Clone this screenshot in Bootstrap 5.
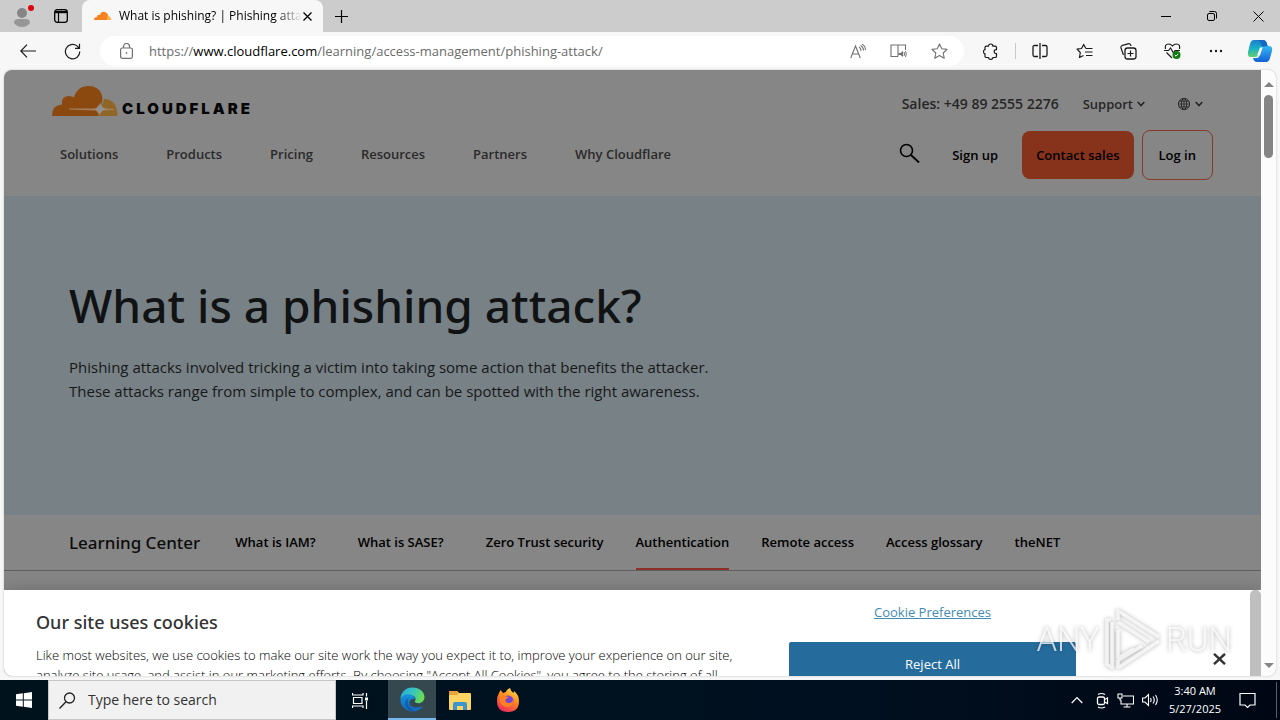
<!DOCTYPE html>
<html lang="en">
<head>
<meta charset="utf-8">
<meta name="viewport" content="width=device-width, initial-scale=1">
<title>What is phishing? | Phishing attack</title>
<link rel="stylesheet" href="https://cdn.jsdelivr.net/npm/bootstrap@5.3.0/dist/css/bootstrap.min.css">
<style>
  body { font-family: "Open Sans", "Noto Sans", sans-serif; font-size: 14px; line-height: 20px; background: #f7f7f7; color: #000; }
  svg { display: block; flex-shrink: 0; fill: none; }
  svg:not([stroke]) { stroke: currentColor; }
  svg[fill] { fill: currentColor; }
  button { background: none; border: 0; padding: 0; color: inherit; font: inherit; }
  a { color: inherit; text-decoration: none; }

  /* browser chrome */
  .tab-strip { height: 32px; background: #cccccc; }
  .browser-tab { width: 241px; margin-left: 14px; padding: 0 11px 0 12px; background: #f7f7f7; border-radius: 8px 8px 0 0; font-size: 12px; }
  .tab-title { white-space: nowrap; -webkit-mask-image: linear-gradient(90deg, #000 86%, transparent); mask-image: linear-gradient(90deg, #000 86%, transparent); }
  .tool-row { height: 38px; background: #f7f7f7; color: #1b1b1b; }
  .address { height: 30px; margin-left: 19px; border-radius: 15px; background: #fff; color: #707070; }
  .address-text { font-size: 13px; outline: 0; white-space: nowrap; color: #6b6b6b; }
  .address-text span { color: #000; }
  .tool-icons { padding: 0 10px 0 17px; }
  .tool-icons > button { width: 20px; display: flex; justify-content: center; }
  .tool-icons > svg { margin: 0 14px; }

  /* page */
  .page-frame { border-radius: 8px; background: #fcfcfc; box-shadow: 0 0 2px #b5b5b5; margin: 0 4px 4px; }
  .site { background: #868686; }
  .site-head { height: 126px; }
  .top-links { padding-right: 10px; font-size: 14px; font-weight: 600; color: #262626; }
  .top-links button { font-size: 13px; }
  .main-links { gap: 48px; font-size: 13px; font-weight: 600; color: #2a2a2a; }
  .brand-name { font-family: Inter, sans-serif; font-weight: 900; font-size: 15px; letter-spacing: 3px; line-height: 14px; color: #060606; }
  .head-acts { font-size: 13px; font-weight: 600; }
  .cta { height: 48px; padding: 0 14px; border-radius: 8px; background: #87331b; }
  .cta-line { height: 50px; padding: 0 16px; border-radius: 8px; border: 1px solid #87392a; }
  .hero { height: 319px; background: #788185; padding: 76px 65px 0; color: #101214; }
  .hero h1 { font-family: "Noto Sans", sans-serif; font-size: 46px; line-height: 66px; font-weight: 500; margin: 0 0 17px; }
  .hero p { font-size: 15px; line-height: 24px; margin: 0; max-width: 650px; color: #16191a; }
  .learn { height: 56px; padding: 0 65px; border-bottom: 1px solid #5e5e5e; }
  .learn h2 { font-family: "Noto Sans", sans-serif; font-size: 17px; line-height: 24px; font-weight: 500; margin: 0 35px 0 0; color: #0c0c0c; white-space: nowrap; }
  .learn-links { gap: 32px; font-size: 13px; font-weight: 600; }
  .learn-links a { padding: 17px 0 16px; white-space: nowrap; border-bottom: 2px solid transparent; }
  .learn-links .topic { margin-right: 10px; }
  .learn-links .current { border-bottom-color: #8c3029; }
  .scroll-rail { width: 15px; color: #858585; }
  .scroll-thumb { width: 9px; height: 63px; border-radius: 5px; background: #858585; }

  /* cookie sheet */
  .cookies { height: 86px; background: #fff; box-shadow: 0 0 18px rgba(0,0,0,.2); color: #333; overflow: hidden; }
  .cookies h2 { font-family: "Noto Sans", sans-serif; font-size: 18px; line-height: 26px; font-weight: 500; margin: 0 0 10px; }
  .cookies p { font-size: 13px; line-height: 20px; font-weight: 300; color: #000; margin: 0; }
  .cookie-copy { width: 785px; padding: 19px 38px 0 32px; }
  .cookie-acts { width: 287px; }
  .cookie-acts a { font-size: 13px; color: #3f8bb5; text-decoration: underline; }
  .reject { height: 43px; flex-shrink: 0; border-radius: 2px; background: #256c9d; color: #fff; font-size: 13px; }
  .cookie-thumb { width: 11px; border-radius: 5px 5px 0 0; background: #bfbfbf; }
  .watermark { right: 48px; bottom: 48px; gap: 4px; color: rgba(255,255,255,.75); font: 300 33px/40px Roboto, sans-serif; filter: drop-shadow(0 0 2px rgba(0,0,0,.4)); pointer-events: none; }

  /* taskbar */
  .taskbar { height: 40px; background: linear-gradient(90deg, #00131d, #001020 65%, #000714); color: #fff; }
  .find { width: 288px; background: #f1f1f1; border: 1px solid #c6c6c6; color: #222; }
  .find input { border: 0; background: none; outline: 0; width: 220px; font-size: 14px; color: #333; padding: 0; }
  .find input::placeholder { color: #333; opacity: 1; }
  .task-btn { width: 48px; height: 40px; }
  .task-on { background: #35484f; border-bottom: 2px solid #76b9ed; }
  .clock { width: 56px; font-size: 11px; line-height: 18px; white-space: nowrap; }
  .desk-edge { width: 4px; margin-left: 12px; border-left: 1px solid #56606b; }
</style>
</head>
<body class="vh-100 d-flex flex-column overflow-hidden">

<header>
  <div class="tab-strip d-flex align-items-center">
    <button class="ms-2 ps-1 position-relative" aria-label="Profile">
      <svg width="26" height="26" viewBox="0 0 26 26" stroke="none"><circle cx="10" cy="10" r="5" fill="#858585"/><path d="M2 20q0-4 4-4h8q4 0 4 4q-3 4-8 4t-8-4z" fill="#979797"/><circle cx="19" cy="5" r="3" fill="#e3000f"/></svg>
    </button>
    <button class="ms-3" aria-label="Tab actions">
      <svg width="14" height="14" viewBox="0 0 14 14"><rect x=".7" y=".7" width="12.6" height="12.6" rx="2.5" stroke-width="1.3"/><path d="M1 3h12" stroke-width="2.4"/><path d="M4.5 3v10" stroke-width="1.2"/></svg>
    </button>
    <div class="browser-tab d-flex align-items-center align-self-stretch">
      <svg class="me-2" width="17" height="10" viewBox="0 0 17 10" stroke="none"><path d="M0 9q0-3 3-3q0-3 3-2q1-4 5-3q3 1 3 4l-1 4z" fill="#f6821f"/><path d="M13.500 5q3.500 0 3.500 4h-4z" fill="#fbad41"/></svg>
      <span class="tab-title">What is phishing? | Phishing atta</span>
      <button class="ms-auto" aria-label="Close tab"><svg width="9" height="9" viewBox="0 0 9 9"><path d="M.5.5l8 8M8.500.5l-8 8" stroke-width="1.300"/></svg></button>
    </div>
    <button class="ms-2 ps-1" aria-label="New tab"><svg width="13" height="13" viewBox="0 0 13 13"><path d="M6.500 0v13M0 6.500h13" stroke-width="1.200"/></svg></button>
    <div class="ms-auto d-flex align-items-center gap-4 pe-3">
      <button class="me-2 pe-1" aria-label="Minimise"><svg width="10" height="10" viewBox="0 0 10 10"><path d="M0 5.500h10"/></svg></button>
      <button class="me-2 pe-1" aria-label="Restore"><svg width="10" height="10" viewBox="0 0 10 10"><rect x=".5" y="2.500" width="7" height="7" rx="1.500"/><path d="M2.500.5h5q2 0 2 2v5"/></svg></button>
      <button aria-label="Close"><svg width="11" height="11" viewBox="0 0 11 11"><path d="M.5.5l10 10M10.500.5l-10 10"/></svg></button>
    </div>
  </div>

  <div class="tool-row d-flex align-items-center">
    <button class="ms-3 ps-1" aria-label="Back"><svg width="16" height="14" viewBox="0 0 16 14"><path d="M16 7H1M7 .7L.8 7L7 13.300" stroke-width="1.200"/></svg></button>
    <button class="ms-4 ps-1" aria-label="Refresh"><svg width="17" height="17" viewBox="0 0 17 17"><path d="M15.800 8.500A7.200 7.200 0 1 1 13 2.900L15 5M15.500.8V5.300H11" stroke-width="1.200"/></svg></button>
    <div class="address flex-grow-1 px-3 d-flex align-items-center">
      <svg class="ms-1" width="13" height="16" viewBox="0 0 13 16"><rect x=".6" y="5" width="11.800" height="10.300" rx="1.800" stroke-width="1.200"/><path d="M3.500 5V3.500a3 3 0 0 1 6 0V5" stroke-width="1.200"/><circle cx="6.500" cy="10" r=".6"/></svg>
      <div class="address-text ms-3 flex-grow-1" role="textbox" contenteditable="true" spellcheck="false" aria-label="Address">https://<span>www.cloudflare.com</span>/learning/access-management/phishing-attack/</div>
      <button class="me-4" aria-label="Read aloud"><svg width="16" height="15" viewBox="0 0 16 15"><path d="M.7 14L5.500 2L10.300 14M2.300 10h6.400M9 3q2 1 2 4M10.500 1.500q3 1.500 3 5M12 0q3.500 2 3.500 6" stroke-width="1.100"/></svg></button>
      <button class="me-4" aria-label="Reader"><svg width="17" height="16" viewBox="0 0 17 16"><path d="M8 2v11.500M8 2H1v11.500h7M8 2h7.500v5" stroke-width="1.100"/><path d="M8.500 10h2l2.500-2v6l-2.500-2h-2z" fill="currentColor" stroke="none"/><path d="M14 9q1 2 0 4M15.500 8q1.500 3 0 6"/></svg></button>
      <button aria-label="Favourite"><svg width="17" height="16" viewBox="0 0 17 16"><path d="M8.500 1l2.300 4.800 5.200.6-3.800 3.600 1 5.200-4.700-2.600-4.700 2.600 1-5.200L1 6.400l5.200-.6z" stroke-width="1.100" stroke-linejoin="round"/></svg></button>
    </div>
    <div class="tool-icons d-flex align-items-center">
      <button aria-label="Extensions"><svg width="16" height="17" viewBox="0 0 16 17"><path d="M2 4.500q0-1.300 1.300-1.300H5.500Q5.500 1 7.700 1t2.200 2.200h2.300q1.300 0 1.300 1.300v2.200q-2.300-.2-2.300 1.900t2.300 1.900v2.700q0 1.300-1.300 1.300H9.900q0 1.800-2.200 1.800t-2.200-1.800H3.300Q2 14.500 2 13.200v-2.500H1.500q-1-.6-1-2t1-2H2z" stroke-width="1.200" stroke-linejoin="round"/></svg></button>
      <svg width="1" height="16" viewBox="0 0 1 16" stroke="#c8c8c8"><path d="M.5 0v16"/></svg>
      <button aria-label="Split screen"><svg width="16" height="16" viewBox="0 0 16 16"><path d="M6 2.500H2.500Q1 2.500 1 4v8q0 1.500 1.500 1.500H6M10 2.500h3.500Q15 2.500 15 4v8q0 1.500-1.500 1.500H10M8 0v16" stroke-width="1.300"/></svg></button>
      <button class="ms-4" aria-label="Favourites"><svg width="17" height="16" viewBox="0 0 17 16"><path d="M9.800 5.500L7.700 1.500 5.500 5.500 1 6.200l3.300 3.300-.8 5L7.500 12.500" stroke-width="1.200" stroke-linejoin="round"/><path d="M10 5.500h6.500M9 9h7.500M10 12.500h6.500" stroke-width="1.200"/></svg></button>
      <button class="ms-4" aria-label="Collections"><svg width="17" height="17" viewBox="0 0 17 17"><rect x="5" y="5" width="11" height="11" rx="2.500" stroke-width="1.300"/><path d="M3.500 12L1 5Q.5 3 2.500 2.300L8 .8q2-.5 2.800 1.400L11 3M10.500 7.500v6M7.500 10.500h6" stroke-width="1.200"/></svg></button>
      <button class="ms-4" aria-label="Browser essentials"><svg width="17" height="16" viewBox="0 0 17 16"><path d="M1.500 6Q.5 1 4.500 1 7 1 8.500 3 10 1 12.500 1q4 0 3 5M2.500 9.500L8 15M0 7.500h4.500L6.500 5l3 5L11 7.500h5" stroke-width="1.200"/><circle cx="12.500" cy="12" r="4" fill="#107c10" stroke="none"/><path d="M10.800 12l1.200 1.200 2.200-2.300" stroke="#fff"/></svg></button>
      <button class="ms-4" aria-label="More"><svg width="14" height="4" viewBox="0 0 14 4" fill="currentColor" stroke="none"><circle cx="2" cy="2" r="1.200"/><circle cx="7" cy="2" r="1.200"/><circle cx="12" cy="2" r="1.200"/></svg></button>
      <button class="ms-4" aria-label="Copilot"><svg width="26" height="24" viewBox="0 0 26 24" stroke="none"><defs><linearGradient id="ca" x1="0" y1="0" x2="0" y2="1"><stop offset="0" stop-color="#1c7fd0"/><stop offset=".5" stop-color="#18b0c4"/><stop offset="1" stop-color="#65cf70"/></linearGradient><linearGradient id="cb" x1="0" y1="0" x2="0" y2="1"><stop offset="0" stop-color="#35b9f1"/><stop offset="1" stop-color="#1360d8"/></linearGradient></defs><path d="M7 1h9q3 0 4 4l1 3h-4q-3 0-4 4l-1 4q-1 2-4 2H4q-4 0-3-5L3 5q1-4 4-4z" fill="url(#ca)"/><path d="M19 23h-9q-3 0-4-4h4q2 0 3-4l2-6q1-2 3-2h4q4 0 3 5l-2 7q-1 4-4 4z" fill="url(#cb)"/><path d="M16 1q3 0 4 4l.7 2.200L15 7.500Q13 1 10 1z" fill="#1668c7"/><path d="M13 8.500h2.500l-2.500 8h-3z" fill="#f7f7f7"/></svg></button>
    </div>
  </div>
</header>

<div class="page-frame flex-grow-1 d-flex overflow-hidden position-relative">
  <main class="site flex-grow-1 position-relative overflow-hidden">
    <div class="site-head d-flex justify-content-between px-5">
      <div class="d-flex flex-column pt-3">
        <a href="#" class="d-flex align-items-end" aria-label="Cloudflare home">
          <svg width="66" height="30" viewBox="0 0 66 30" stroke="none"><path d="M0 30Q0 19 10 18.500Q9 10 17 10q3 0 5 1.500Q25 0 37 0q9 0 12.500 8Q51.500 14 49 19l-3 11z" fill="#8b4910"/><path d="M52 13q13 0 13.500 17H46l3.500-9Q51 17 52 13z" fill="#916526"/><path d="M17 22.500h27l3-4 3 4 12 .4v1l-12 .6-3 4-3-4-27-1z" fill="#a08260"/><path d="M42 23q6-1 6-7 1 6 7 7-6 1-7 6-1-5-6-6z" fill="#929292"/></svg>
          <span class="brand-name ms-1">CLOUDFLARE</span>
        </a>
        <nav class="main-links d-flex ms-2 mt-4 pt-1">
          <a href="#">Solutions</a><a href="#">Products</a><a href="#">Pricing</a><a href="#">Resources</a><a href="#">Partners</a><a href="#">Why Cloudflare</a>
        </nav>
      </div>
      <div class="d-flex flex-column align-items-end pt-4">
        <div class="top-links d-flex align-items-center gap-4">
          <a href="#">Sales: +49 89 2555 2276</a>
          <button class="d-flex align-items-center gap-1">Support <svg width="8" height="6" viewBox="0 0 8 6"><path d="M.7 1L4 4.500 7.300 1" stroke-width="1.600"/></svg></button>
          <button class="d-flex align-items-center gap-1 ms-2" aria-label="Language"><svg width="14" height="14" viewBox="0 0 14 14"><circle cx="7" cy="7" r="5.600"/><ellipse cx="7" cy="7" rx="2.600" ry="5.600"/><path d="M1.400 7h11.200M7 1.400v11.200M2.200 4.200h9.600M2.200 9.800h9.600" stroke-width=".8"/></svg><svg width="8" height="6" viewBox="0 0 8 6"><path d="M.7 1L4 4.500 7.300 1" stroke-width="1.600"/></svg></button>
        </div>
        <div class="head-acts d-flex align-items-center mt-3">
          <button class="me-4 mb-1" aria-label="Search"><svg width="21" height="21" viewBox="0 0 21 21"><circle cx="7.500" cy="7.500" r="6" stroke-width="1.600"/><path d="M12 12L20 19.500" stroke-width="1.800"/></svg></button>
          <a href="#" class="ms-2 me-4">Sign up</a>
          <button class="cta me-2">Contact sales</button>
          <button class="cta-line">Log in</button>
        </div>
      </div>
    </div>
    <section class="hero">
      <h1>What is a phishing attack?</h1>
      <p>Phishing attacks involved tricking a victim into taking some action that benefits the attacker. These attacks range from simple to complex, and can be spotted with the right awareness.</p>
    </section>
    <div class="learn d-flex align-items-center">
      <h2>Learning Center</h2>
      <nav class="learn-links d-flex">
        <a href="#" class="topic">What is IAM?</a><a href="#" class="topic">What is SASE?</a><a href="#">Zero Trust security</a><a href="#" class="current">Authentication</a><a href="#">Remote access</a><a href="#">Access glossary</a><a href="#">theNET</a>
      </nav>
    </div>
    <section class="cookies position-absolute bottom-0 start-0 end-0 d-flex" aria-label="Cookie notice">
      <div class="cookie-copy">
        <h2>Our site uses cookies</h2>
        <p>Like most websites, we use cookies to make our site work the way you expect it to, improve your experience on our site, analyze site usage, and assist in our marketing efforts. By choosing "Accept All Cookies", you agree to the storing of all</p>
      </div>
      <div class="cookie-acts d-flex flex-column pt-2">
        <a href="#" class="align-self-center mt-1 mb-3 pb-1">Cookie Preferences</a>
        <button class="reject">Reject All</button>
      </div>
      <button class="ms-auto me-4 mt-5 pt-1" aria-label="Close notice"><svg width="13" height="12" viewBox="0 0 13 12"><path d="M1 .8l11 10.400M12 .8L1 11.200" stroke-width="2.400"/></svg></button>
      <div class="cookie-thumb align-self-stretch"></div>
    </section>
  </main>
  <div class="scroll-rail d-flex flex-column align-items-center py-2">
    <svg class="mt-1" width="10" height="5" viewBox="0 0 10 5" stroke="none" fill="currentColor"><path d="M0 5l5-5 5 5z"/></svg>
    <div class="scroll-thumb mt-2"></div>
    <svg class="mt-auto" width="10" height="5" viewBox="0 0 10 5" stroke="none" fill="currentColor"><path d="M0 0l5 5 5-5z"/></svg>
  </div>
</div>

<footer class="taskbar d-flex align-items-center">
  <button class="task-btn d-flex align-items-center justify-content-center" aria-label="Start"><svg width="16" height="16" viewBox="0 0 16 16" stroke="none" fill="currentColor"><path d="M0 2.300l6.800-1v6.200H0zM7.800 1.200L16 0v7.500H7.800zM0 8.500h6.800v6.200L0 13.700zM7.800 8.500H16V16l-8.200-1.200z"/></svg></button>
  <label class="find d-flex align-items-center align-self-stretch ps-2">
    <svg width="19" height="19" viewBox="0 0 19 19"><circle cx="12.500" cy="7" r="5" stroke-width="1.300"/><path d="M9 10.800L2.500 17.500" stroke-width="1.400"/></svg>
    <input class="ms-2 ps-1" type="text" placeholder="Type here to search" aria-label="Type here to search">
  </label>
  <button class="task-btn d-flex align-items-center justify-content-center" aria-label="Task view"><svg width="17" height="17" viewBox="0 0 17 17"><path d="M.5 1v2h10.500V1M.5 16v-2h10.500v2M1.500 5.500h8.500v6H1.500zM14.500 1v3.500M14.500 9v8" stroke-width="1.200"/><path d="M13 5.500h3v3h-3z" fill="currentColor" stroke="none"/></svg></button>
  <button class="task-btn task-on ms-1 d-flex align-items-center justify-content-center" aria-label="Edge"><svg width="25" height="25" viewBox="0 0 24 24" stroke="none"><defs><linearGradient id="ea" x1="0" y1="0" x2="1" y2=".3"><stop offset="0" stop-color="#2aa9e0"/><stop offset=".55" stop-color="#36c5c0"/><stop offset="1" stop-color="#66dc57"/></linearGradient><linearGradient id="eb" x1="0" y1="0" x2="0" y2="1"><stop offset="0" stop-color="#1593dd"/><stop offset="1" stop-color="#1565bd"/></linearGradient></defs><path d="M.5 12C.5 5 5.500.5 12 .5c7 0 11.500 4.500 11.500 9 0 4-3 6-6 6-2 0-4-.7-3-2.200 1.500-3-.5-5-3-5C6 8 1.500 9 .5 12z" fill="url(#ea)"/><path d="M.5 12C2 8 6 6.200 10 7.300c3 .7 4.500 2.700 4.600 4.500C14 10.500 9 11 9 15c0 4 6 6 11.500 3.700.7-.3 1.200.2.700.8C19 22 16 23.500 12.500 23.500 6 23.500 0 18.500.5 12z" fill="url(#eb)"/><path d="M8 10.500c-2 5 1.500 11 6 12.500-6-.3-9.500-4-9-8 .2-2 1.500-4 3-4.500z" fill="#0e4f97" opacity=".6"/></svg></button>
  <button class="task-btn d-flex align-items-center justify-content-center" aria-label="Files"><svg width="22" height="19" viewBox="0 0 22 19" stroke="none"><path d="M0 1q0-1 1-1h7l2 2h11q1 0 1 1v15q0 1-1 1H1q-1 0-1-1z" fill="#fcd462"/><path d="M0 1q0-1 1-1h7l2 2-2 2H0z" fill="#e8a33d"/><path d="M4 19v-6q0-2 2-2h10q2 0 2 2v6h-4v-4H8v4z" fill="#3b94d0"/></svg></button>
  <button class="task-btn d-flex align-items-center justify-content-center" aria-label="Firefox"><svg width="24" height="24" viewBox="0 0 24 24" stroke="none"><defs><linearGradient id="fa" x1=".8" y1="0" x2=".3" y2="1"><stop offset="0" stop-color="#ffe14a"/><stop offset=".45" stop-color="#ff8a1e"/><stop offset="1" stop-color="#f0285e"/></linearGradient></defs><path d="M3 5l1.500-3L7 5l3-1q0-2 4-4 .5 3 3.500 5l.5-2q5 4 5 10 0 11-11 11T1 13q0-5 2-8z" fill="url(#fa)"/><circle cx="12" cy="13" r="5.500" fill="#7542d8"/><path d="M4 8q3-1.500 6 .5l3 .5-3.500 2.500Q9 15 13 15q3 0 4-3.500 1 7-5 7.500-7 0-8-6z" fill="#ff8023"/></svg></button>
  <div class="ms-auto d-flex align-items-center gap-2">
    <button aria-label="Hidden icons"><svg width="12" height="8" viewBox="0 0 12 8"><path d="M.7 7L6 1.500 11.300 7" stroke-width="1.200"/></svg></button>
    <svg class="ms-1" width="14" height="17" viewBox="0 0 14 17"><rect x="2.500" y="5" width="7" height="7.500" rx="1.500" stroke-width="1.300"/><path d="M9.500 7.500l3-1.500v5.500l-3-1.500M3 2.500q3.500-2 7 0M3 15q3.500 2 7 0" stroke-width="1.200"/></svg>
    <svg width="17" height="15" viewBox="0 0 17 15"><path d="M6 3h10.500v8H4V7M10 11v3M6.500 14h7M1 1h4v4H1zM3 5v2h1" stroke-width="1.100"/></svg>
    <svg width="17" height="14" viewBox="0 0 17 14"><path d="M.6 5h2.400L6.500 1.500v11L3 9H.6zM8.500 5q1.200 2 0 4M11 3.500q2.500 3.500 0 7M13.500 2q3.500 5 0 10" stroke-width="1.100"/></svg>
    <div class="clock text-center">3:40 AM<br>5/27/2025</div>
    <button class="ms-2" aria-label="Notifications"><svg width="17" height="17" viewBox="0 0 17 17"><path d="M1 1.500h15v11.500h-5L8.500 15.500 6 13H1z" stroke-width="1.200"/></svg></button>
    <div class="desk-edge align-self-stretch">&nbsp;</div>
  </div>
</footer>

<div class="watermark position-fixed d-flex align-items-center">
  <span>ANY</span>
  <svg width="58" height="64" viewBox="0 0 58 64" stroke-width="3.500" stroke-linejoin="round"><path d="M14 12V3L55 29M14 14L45 34M7 12H3v44l5 4V14M14 22v28L30 41M14 60L55 33M14 52L38 38M14 60v-8"/></svg>
  <span>RUN</span>
</div>

<script src="https://cdn.jsdelivr.net/npm/bootstrap@5.3.0/dist/js/bootstrap.bundle.min.js"></script>
</body>
</html>
